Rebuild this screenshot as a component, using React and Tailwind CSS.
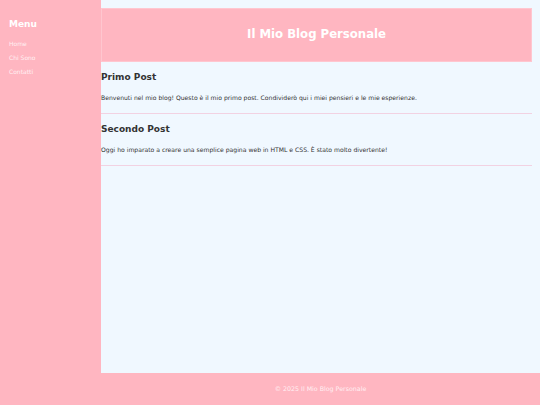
const posts = [
  {
    title: 'Primo Post',
    body: 'Benvenuti nel mio blog! Questo è il mio primo post. Condividerò qui i miei pensieri e le mie esperienze.',
  },
  {
    title: 'Secondo Post',
    body: 'Oggi ho imparato a creare una semplice pagina web in HTML e CSS. È stato molto divertente!',
  },
];

const links = ['Home', 'Chi Sono', 'Contatti'];

const App = () => {
  return (
    <div className="min-h-[405px] flex flex-col bg-[#ffb6c1] font-['DejaVu_Sans',sans-serif] text-[#333]">
      <div className="flex h-[373px]">
        {/* Sidebar */}
        <aside className="w-[101px] shrink-0 bg-[#ffb6c1] px-[9px] pt-[18px]">
          <h2 className="text-[9px] leading-[12px] font-bold text-white">Menu</h2>
          <ul className="mt-[9px] space-y-[4px]">
            {links.map(link => (
              <li key={link} className="text-[6px] leading-[10px] text-[#fff0f3]">
                {link}
              </li>
            ))}
          </ul>
        </aside>

        {/* Contenuto */}
        <main className="flex-1 bg-[#f0f8ff] pt-2 pr-[8px]">
          <header className="h-[54px] bg-[#ffb6c1] border border-[#ffc6cf] flex items-center justify-center">
            <h1 className="text-[11.7px] font-bold text-white">Il Mio Blog Personale</h1>
          </header>

          {posts.map(post => (
            <article key={post.title} className="pt-[7px] pb-[10px] border-b border-[#f2d2e2]">
              <h2 className="text-[9px] leading-[16px] font-bold">{post.title}</h2>
              <p className="mt-2 text-[6.1px] leading-[10px]">{post.body}</p>
            </article>
          ))}
        </main>
      </div>

      <footer className="h-8 pl-[101px] flex items-center justify-center">
        <p className="text-[6.3px] text-[#fff0f3]">© 2025 Il Mio Blog Personale</p>
      </footer>
    </div>
  );
};

export default App;
